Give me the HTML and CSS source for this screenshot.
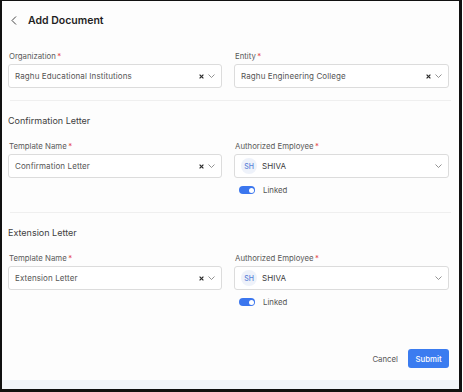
FILE: index.html
```html
<!DOCTYPE html>
<html lang="en">
<head>
    <meta charset="UTF-8">
    <meta name="viewport" content="width=device-width, initial-scale=1.0">
    <title>Add Document</title>
    <link rel="stylesheet" href="styles.css">
</head>
<body>
    <div class="frame">
        <main class="dialog">
            <header class="head">
                <svg class="back" width="6" height="9" viewBox="0 0 6 9"><path d="M5 0.5 L1 4.5 L5 8.5" fill="none" stroke="#444" stroke-width="1"/></svg>
                <h1>Add Document</h1>
            </header>

            <section class="grid">
                <div class="field">
                    <label>Organization<span class="req">*</span></label>
                    <div class="select">
                        <span class="value">Raghu Educational Institutions</span>
                        <svg class="clear" width="5" height="5" viewBox="0 0 5 5"><path d="M0.6 0.6 L4.4 4.4 M4.4 0.6 L0.6 4.4" stroke="#2a2a2a" stroke-width="1.2"/></svg>
                        <svg class="chev" width="7" height="4" viewBox="0 0 7 4"><path d="M0.5 0.5 L3.5 3.5 L6.5 0.5" fill="none" stroke="#777" stroke-width="0.8"/></svg>
                    </div>
                </div>
                <div class="field">
                    <label>Entity<span class="req">*</span></label>
                    <div class="select">
                        <span class="value">Raghu Engineering College</span>
                        <svg class="clear" width="5" height="5" viewBox="0 0 5 5"><path d="M0.6 0.6 L4.4 4.4 M4.4 0.6 L0.6 4.4" stroke="#2a2a2a" stroke-width="1.2"/></svg>
                        <svg class="chev" width="7" height="4" viewBox="0 0 7 4"><path d="M0.5 0.5 L3.5 3.5 L6.5 0.5" fill="none" stroke="#777" stroke-width="0.8"/></svg>
                    </div>
                </div>
            </section>

            <hr class="divider">

            <h2 class="section-title">Confirmation Letter</h2>
            <section class="grid">
                <div class="field">
                    <label>Template Name<span class="req">*</span></label>
                    <div class="select">
                        <span class="value">Confirmation Letter</span>
                        <svg class="clear" width="5" height="5" viewBox="0 0 5 5"><path d="M0.6 0.6 L4.4 4.4 M4.4 0.6 L0.6 4.4" stroke="#2a2a2a" stroke-width="1.2"/></svg>
                        <svg class="chev" width="7" height="4" viewBox="0 0 7 4"><path d="M0.5 0.5 L3.5 3.5 L6.5 0.5" fill="none" stroke="#777" stroke-width="0.8"/></svg>
                    </div>
                </div>
                <div class="field">
                    <label>Authorized Employee<span class="req">*</span></label>
                    <div class="select">
                        <span class="avatar">SH</span>
                        <span class="value name">SHIVA</span>
                        <svg class="chev" width="7" height="4" viewBox="0 0 7 4"><path d="M0.5 0.5 L3.5 3.5 L6.5 0.5" fill="none" stroke="#777" stroke-width="0.8"/></svg>
                    </div>
                    <div class="linked">
                        <span class="toggle"><span class="knob"></span></span>
                        <span>Linked</span>
                    </div>
                </div>
            </section>

            <hr class="divider">

            <h2 class="section-title">Extension Letter</h2>
            <section class="grid">
                <div class="field">
                    <label>Template Name<span class="req">*</span></label>
                    <div class="select">
                        <span class="value">Extension Letter</span>
                        <svg class="clear" width="5" height="5" viewBox="0 0 5 5"><path d="M0.6 0.6 L4.4 4.4 M4.4 0.6 L0.6 4.4" stroke="#2a2a2a" stroke-width="1.2"/></svg>
                        <svg class="chev" width="7" height="4" viewBox="0 0 7 4"><path d="M0.5 0.5 L3.5 3.5 L6.5 0.5" fill="none" stroke="#777" stroke-width="0.8"/></svg>
                    </div>
                </div>
                <div class="field">
                    <label>Authorized Employee<span class="req">*</span></label>
                    <div class="select">
                        <span class="avatar">SH</span>
                        <span class="value name">SHIVA</span>
                        <svg class="chev" width="7" height="4" viewBox="0 0 7 4"><path d="M0.5 0.5 L3.5 3.5 L6.5 0.5" fill="none" stroke="#777" stroke-width="0.8"/></svg>
                    </div>
                    <div class="linked">
                        <span class="toggle"><span class="knob"></span></span>
                        <span>Linked</span>
                    </div>
                </div>
            </section>

            <footer class="actions">
                <button class="btn cancel">Cancel</button>
                <button class="btn submit">Submit</button>
            </footer>
        </main>
        <div class="strip"></div>
    </div>
</body>
</html>
```

FILE: styles.css
```css
* {
    box-sizing: border-box;
    margin: 0;
    padding: 0;
}
body {
    background-color: white;
    font-family: 'Inter', 'Noto Sans', sans-serif;
    color: #333;
}
.frame {
    width: 462px;
    height: 392px;
    border-left: 2px solid #111;
    border-top: 1px solid #111;
    border-right: 3px solid #111;
    border-bottom: 3px solid #111;
    display: flex;
    flex-direction: column;
}
.dialog {
    flex: 1;
    background-color: #fdfdfd;
    padding: 0 9px 0 6px;
    display: flex;
    flex-direction: column;
}
.strip {
    height: 9px;
    background-color: #f2f5f9;
}
.head {
    height: 38px;
    display: flex;
    align-items: center;
}
.back {
    margin-left: 3px;
    margin-right: 11px;
}
.head h1 {
    font-size: 10.5px;
    font-weight: 600;
    color: #1f1f1f;
}
.grid {
    display: grid;
    grid-template-columns: 214px 215px;
    column-gap: 12px;
}
.head + .grid {
    margin-top: 11px;
}
.field label {
    display: block;
    font-size: 7.8px;
    line-height: 12px;
    color: #5a5a5a;
    margin-bottom: 2px;
    padding-left: 1px;
}
.req {
    color: #e5484d;
    margin-left: 1.5px;
}
.select {
    height: 24px;
    border: 1px solid #dcdcdc;
    border-radius: 3px;
    background-color: white;
    display: flex;
    align-items: center;
    padding: 0 5px 0 6px;
}
.value {
    flex: 1;
    font-size: 8px;
    letter-spacing: 0.1px;
    color: #555;
}
.value.name {
    color: #3a3a3a;
    font-weight: 400;
    margin-left: 5px;
}
.clear {
    margin-right: 4px;
}
.chev {
    margin-right: 1px;
}
.avatar {
    width: 16px;
    height: 16px;
    border-radius: 50%;
    background-color: #eef2fa;
    color: #5a82d8;
    font-size: 7px;
    font-weight: 500;
    display: flex;
    align-items: center;
    justify-content: center;
}
.linked {
    display: flex;
    align-items: center;
    margin-top: 7px;
    height: 10px;
    font-size: 7.8px;
    color: #555;
    padding-left: 5px;
}
.toggle {
    width: 16px;
    height: 8px;
    border-radius: 4px;
    background-color: #3b76ee;
    display: flex;
    align-items: center;
    justify-content: flex-end;
    padding-right: 1.5px;
    margin-right: 8px;
}
.knob {
    width: 5px;
    height: 5px;
    border-radius: 50%;
    background-color: white;
}
.divider {
    border: none;
    border-top: 1px solid #efefef;
    margin-top: 12px;
    width: 441px;
    margin-left: 2px;
}
.section-title {
    font-size: 9px;
    font-weight: 400;
    line-height: 14px;
    color: #404040;
    margin-top: 13px;
    margin-bottom: 12px;
}
.grid + .divider {
    margin-top: 17px;
}
.grid:first-of-type + .divider {
    margin-top: 12px;
}
.actions {
    display: flex;
    justify-content: flex-end;
    align-items: center;
    margin-top: 42px;
    padding-right: 1px;
}
.btn {
    font-family: inherit;
    font-size: 7.8px;
    border: none;
    background: none;
    cursor: pointer;
}
.cancel {
    color: #555;
    margin-right: 10px;
}
.submit {
    background-color: #3b7cf0;
    color: white;
    font-weight: 500;
    width: 41px;
    height: 19px;
    border-radius: 3px;
}
```
